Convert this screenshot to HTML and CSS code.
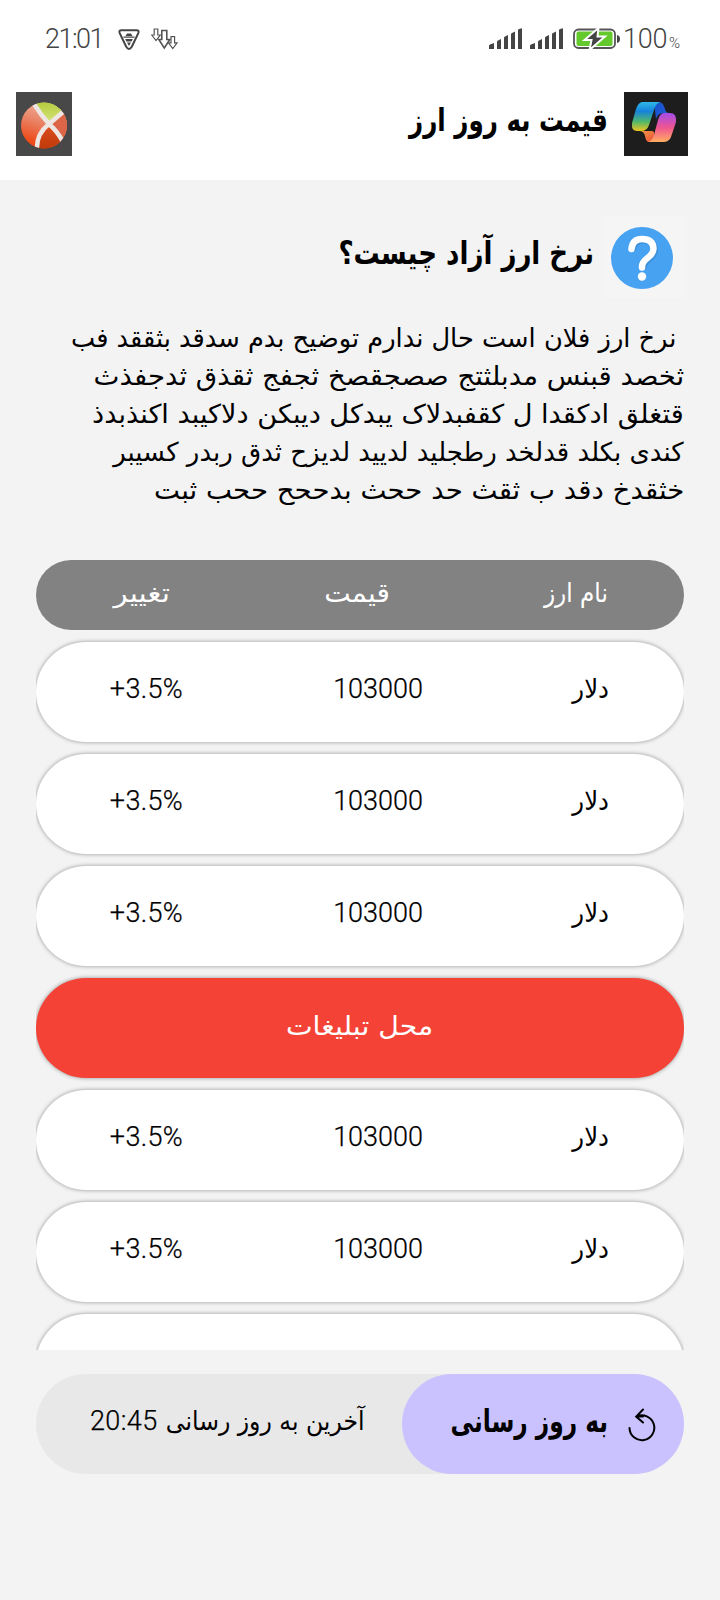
FILE: index.html
```html
<!DOCTYPE html>
<html lang="fa" dir="rtl">
<head>
<meta charset="utf-8">
<title>قیمت به روز ارز</title>
<link rel="stylesheet" href="styles.css">
</head>
<body>
<div class="status" dir="ltr">
  <div class="status-left">
    <span class="clock">21:01</span>
    <svg class="shield" width="24" height="23" viewBox="0 0 24 23">
      <path d="M4.500 2.200h15q3 0 1.800 3l-6.500 13.600q-2.800 4.200-5.600 0L2.700 5.200q-1.200-3 1.800-3z" fill="#fff" stroke="#444" stroke-width="2"/>
      <path d="M8.500 8l1.500-2.500h4L15.500 8zM6.500 8.500h11v1.300h-11zM8.200 11h7.600l-1.200 2.500H9.400zM10 14.500h4L12 18z" fill="#444"/>
    </svg>
    <svg class="arrows" width="28" height="23" viewBox="0 0 28 23" fill="#fff" stroke="#555" stroke-width="1.200">
      <path d="M3.200 1h3.600v6h2.500L5 12.500.7 7h2.500z"/>
      <path d="M10.800 2.500h5v9h3L13.300 20 7.800 11.500h3z" stroke-width="1.600"/>
      <path d="M20 8.600h3.600v6.200h2.500l-4.300 5.700-4.300-5.700H20z"/>
    </svg>
  </div>
  <div class="status-right">
    <svg class="signal" width="34" height="22" viewBox="0 0 34 22" fill="#444">
      <path d="M0 21v-3q0-1 1-1.400L5 15v6zM8 21v-7q0-1 1-1.400l3-1.600v10zM15 21V10q0-1 1-1.400L19 7v14zM22 21V6.500q0-1 1-1.400L26 3.500V21zM29 21V2.500q0-1 1-1.400L33 .3V21z"/>
    </svg>
    <svg class="signal" width="34" height="22" viewBox="0 0 34 22" fill="#444">
      <path d="M0 21v-3q0-1 1-1.400L5 15v6zM8 21v-7q0-1 1-1.400l3-1.600v10zM15 21V10q0-1 1-1.400L19 7v14zM22 21V6.500q0-1 1-1.400L26 3.500V21zM29 21V2.500q0-1 1-1.400L33 .3V21z"/>
    </svg>
    <svg class="battery" width="48" height="23" viewBox="0 0 48 23">
      <rect x="1" y="1.500" width="41" height="18.500" rx="4.500" fill="#fff" stroke="#555" stroke-width="1.800"/>
      <rect x="3.500" y="3.500" width="36" height="14.500" rx="2" fill="#63c92c"/>
      <path d="M44 7q3 .5 3 4t-3 4z" fill="#444"/>
      <path d="M25.500 0L11.500 12h7L16.500 22 32 8.500h-7.500z" fill="#444" stroke="#fff" stroke-width="2"/>
    </svg>
    <span class="level">100</span><span class="percent">%</span>
  </div>
</div>

<header class="topbar">
  <svg class="brand" width="64" height="64" viewBox="0 0 64 64">
    <defs>
      <linearGradient id="cool" x1="0" y1="0" x2="0" y2="1"><stop offset="0" stop-color="#2fb9e8"/><stop offset=".32" stop-color="#1583dc"/><stop offset=".68" stop-color="#51b86a"/><stop offset="1" stop-color="#edc51f"/></linearGradient>
      <linearGradient id="warm" x1="0" y1="0" x2="0" y2="1"><stop offset="0" stop-color="#a24ce9"/><stop offset=".5" stop-color="#ef5591"/><stop offset="1" stop-color="#ffad60"/></linearGradient>
      <linearGradient id="fold" x1="0" y1="0" x2="1" y2="1"><stop offset="0" stop-color="#1555c9"/><stop offset="1" stop-color="#2359dc"/></linearGradient>
      <linearGradient id="tail" x1="0" y1="0" x2="1" y2="1"><stop offset="0" stop-color="#f49c42"/><stop offset="1" stop-color="#e94e39"/></linearGradient>
    </defs>
    <rect width="64" height="64" fill="#1d1d1d"/>
    <path d="M30 10h5q4 0 6 7 1 4 4 4h-6q-5 0-7 6z" fill="url(#fold)"/>
    <path d="M15 39h13q3 0 2 6l-2 5h-3q-3 0-4-6-1-5-6-5z" fill="url(#tail)"/>
    <path d="M18 10h18q-4 1-6 8l-5 15q-2 6-8 6h-4q-6 0-5-8l4-14q2-6 6-7z" fill="url(#cool)"/>
    <path d="M40 21h6q7 0 6 9l-4 12q-2 8-8 8H24q4-1 6-7l4-15q2-7 6-7z" fill="url(#warm)"/>
  </svg>
  <h1 class="app-title"><span class="fit fit-title">قیمت به روز ارز</span></h1>
  <svg class="ball" width="56" height="64" viewBox="0 0 56 64">
    <defs>
      <clipPath id="disc"><circle cx="28" cy="33.500" r="23"/></clipPath>
      <linearGradient id="left" x1=".6" y1="0" x2=".3" y2="1"><stop offset=".1" stop-color="#f0c0b0"/><stop offset=".5" stop-color="#e98062"/><stop offset=".8" stop-color="#ef4a17"/></linearGradient>
      <linearGradient id="base" x1="0" y1="0" x2="0" y2="1"><stop offset="0" stop-color="#dc4e20"/><stop offset="1" stop-color="#bf3908"/></linearGradient>
      <linearGradient id="lime" x1="0" y1="0" x2="0" y2="1"><stop offset="0" stop-color="#b3c936"/><stop offset="1" stop-color="#d7e580"/></linearGradient>
    </defs>
    <rect width="56" height="64" fill="#484848"/>
    <g clip-path="url(#disc)">
      <rect width="56" height="64" fill="url(#left)"/>
      <path d="M33 32L18 8h30l-3 12z" fill="url(#lime)"/>
      <path d="M33 32L46 20l9 10-6 16z" fill="#dd6547"/>
      <path d="M33 32L21 44v14h25l2-10z" fill="url(#base)"/>
      <path d="M18 12q7 11 15 20 9 8 14 18M47 20L33 32Q20 42 21 58" fill="none" stroke="#eee6e3" stroke-width="4.500"/>
    </g>
  </svg>
</header>

<main class="page">
  <section class="intro">
    <div class="intro-head">
      <svg class="help" width="80" height="82" viewBox="0 0 80 82">
        <rect width="80" height="82" fill="#f5f5f5"/>
        <circle cx="38" cy="42" r="31" fill="#48a2f2"/>
        <path d="M27.500 33q1-10 10.500-10 11 0 11.500 9.500 0 5-6 9.500t-5.500 9.500" transform="translate(1.500 1.500)" fill="none" stroke="#327dc2" stroke-opacity=".5" stroke-width="6"/>
        <path d="M27.500 33q1-10 10.500-10 11 0 11.500 9.500 0 5-6 9.500t-5.500 9.500" fill="none" stroke="#fff" stroke-width="6.500" stroke-linecap="round"/>
        <circle cx="38" cy="60.500" r="4.200" fill="#fff"/>
      </svg>
      <h2 class="intro-title"><span class="fit fit-heading">نرخ ارز آزاد چیست؟</span></h2>
    </div>
    <div class="copy">
      <div class="line line-first"><span class="fit fit-l1">نرخ ارز فلان است حال ندارم توضیح بدم سدقد بثققد فب</span></div>
      <div class="line"><span class="fit fit-l2">ثخصد قبنس مدبلثتج صصجقصخ ثجفج ثقذق ثدجفذث</span></div>
      <div class="line"><span class="fit fit-l3">قتغلق ادکقدا ل کقفبدلاک یبدکل دیبکن دلاکیبد اکنذبدذ</span></div>
      <div class="line"><span class="fit fit-l4">کندی بکلد قدلخد رطجلید لدیید لدیزح ثدق ربدر کسیبر</span></div>
      <div class="line"><span class="fit fit-l5">خثقدخ دقد ب ثقث حد ححث بدححح ححب ثبت</span></div>
    </div>
  </section>

  <div class="table-head">
    <span class="fit fit-name">نام ارز</span><span class="fit fit-price">قیمت</span><span class="fit fit-change">تغییر</span>
  </div>
  <div class="list">
    <div class="row"><span class="fit fit-dollar">دلار</span><span class="num">103000</span><span class="num change"><bdi dir="ltr">+3.5%</bdi></span></div>
    <div class="row"><span class="fit fit-dollar">دلار</span><span class="num">103000</span><span class="num change"><bdi dir="ltr">+3.5%</bdi></span></div>
    <div class="row"><span class="fit fit-dollar">دلار</span><span class="num">103000</span><span class="num change"><bdi dir="ltr">+3.5%</bdi></span></div>
    <div class="row ad"><span class="fit fit-ad">محل تبلیغات</span></div>
    <div class="row"><span class="fit fit-dollar">دلار</span><span class="num">103000</span><span class="num change"><bdi dir="ltr">+3.5%</bdi></span></div>
    <div class="row"><span class="fit fit-dollar">دلار</span><span class="num">103000</span><span class="num change"><bdi dir="ltr">+3.5%</bdi></span></div>
    <div class="row"></div>
  </div>

  <footer class="update">
    <button class="refresh">
      <svg class="reload" width="28" height="34" viewBox="0 0 28 34" fill="none" stroke="#000" stroke-width="2" stroke-linecap="round">
        <path d="M1.500 20A12.400 12.400 0 1 0 8.500 8.600H15M15 1.500L8.200 8.600L15 14.500"/>
      </svg>
      <span class="refresh-text"><span class="fit fit-button">به روز رسانی</span></span>
    </button>
    <div class="updated"><span class="fit fit-updated">آخرین به روز رسانی</span><span class="num time">20:45</span></div>
  </footer>
</main>
</body>
</html>
```
FILE: styles.css
```css
* { box-sizing: border-box; }

body {
  margin: 0;
  height: 1600px;
  overflow: hidden;
  background: #f3f3f3;
  color: #000;
  font: 26px/38px "DejaVu Sans", sans-serif;
}

svg { display: block; flex: none; }
h1, h2 { margin: 0; }

/* Horizontal fitting of text, anchored to the right edge */
.fit {
  display: inline-block;
  white-space: nowrap;
  justify-self: start;
  transform: scaleX(var(--sx, 1));
  transform-origin: right center;
}
.fit-title { --sx: .768; }
.fit-heading { --sx: .814; }
.fit-l1 { --sx: .987; }
.fit-l2 { --sx: 1.06; }
.fit-l3 { --sx: 1.044; }
.fit-l4 { --sx: .998; }
.fit-l5 { --sx: 1.062; }
.fit-name { --sx: .89; }
.fit-price { --sx: 1.08; }
.fit-change { --sx: 1.13; }
.fit-dollar { --sx: .94; }
.fit-ad { --sx: 1.09; transform-origin: center; }
.fit-button { --sx: .75; }
.fit-updated { --sx: .905; }

/* Status bar */
.status {
  display: flex;
  justify-content: space-between;
  height: 80px;
  padding: 28px 39px 0 45px;
  background: #fff;
  color: #444;
  font-family: Roboto, sans-serif;
  font-weight: 300;
  line-height: 22px;
}
.status-left, .status-right { display: flex; height: 23px; }
.clock { width: 72px; font-size: 27px; letter-spacing: -1.5px; }
.arrows { margin-left: 10px; }
.signal { margin-right: 7px; }
.battery { margin: 0 2px; }
.level { width: 46px; font-size: 27px; letter-spacing: -.2px; }
.percent { width: 12px; font-size: 15px; line-height: 30px; }

/* Header */
.topbar {
  display: flex;
  height: 100px;
  padding: 12px 32px 0 16px;
  background: #fff;
}
.app-title {
  flex: 1;
  margin-right: 16px;
  font-size: 32px;
  line-height: 57px;
}

.page { padding: 36px 36px 0; }

/* Introduction */
.intro { height: 344px; }
.intro-head { display: flex; height: 96px; }
.intro-title {
  margin-right: 10px;
  font-size: 32px;
  line-height: 74px;
}
.copy { padding-top: 7px; }
.line { height: 38px; }
.line-first { padding-right: 8px; }

/* Price table */
.table-head {
  display: grid;
  grid-template-columns: 218px 220px 1fr;
  height: 70px;
  padding: 14px 76px 0 0;
  border-radius: 35px;
  background: #828282;
  color: #fff;
}
.list {
  display: flex;
  flex-direction: column;
  gap: 12px;
  height: 720px;
  padding-top: 12px;
  overflow: hidden;
}
.row {
  display: grid;
  flex: none;
  grid-template-columns: 186px 240px 1fr;
  height: 100px;
  padding: 28px 75px 0 0;
  border-radius: 50px;
  background: #fff;
  box-shadow: 0 0 4px rgba(0, 0, 0, .4);
}
.num {
  font-family: Roboto, sans-serif;
  font-size: 27px;
  font-weight: 300;
  line-height: 38px;
  -webkit-text-stroke: .25px currentColor;
}
.change { letter-spacing: .3px; }
.ad {
  display: block;
  padding: 29px 0 0 0;
  background: #f44336;
  color: #fff;
  text-align: center;
}

/* Update bar */
.update {
  display: flex;
  height: 100px;
  margin-top: 24px;
  border-radius: 50px;
  background: #e8e8e8;
}
.refresh {
  display: flex;
  width: 282px;
  padding: 0 28px 0 0;
  border: 0;
  border-radius: 50px;
  background: #cac2ff;
  color: #000;
  font: 700 31px/38px "DejaVu Sans", sans-serif;
}
.reload { margin-top: 34px; }
.refresh-text { margin: 28px 20px 0 0; }
.updated {
  display: flex;
  flex: 1;
  padding: 28px 38px 0 0;
  white-space: nowrap;
}
.time {
  margin-right: -13px;
  letter-spacing: .4px;
}
```
